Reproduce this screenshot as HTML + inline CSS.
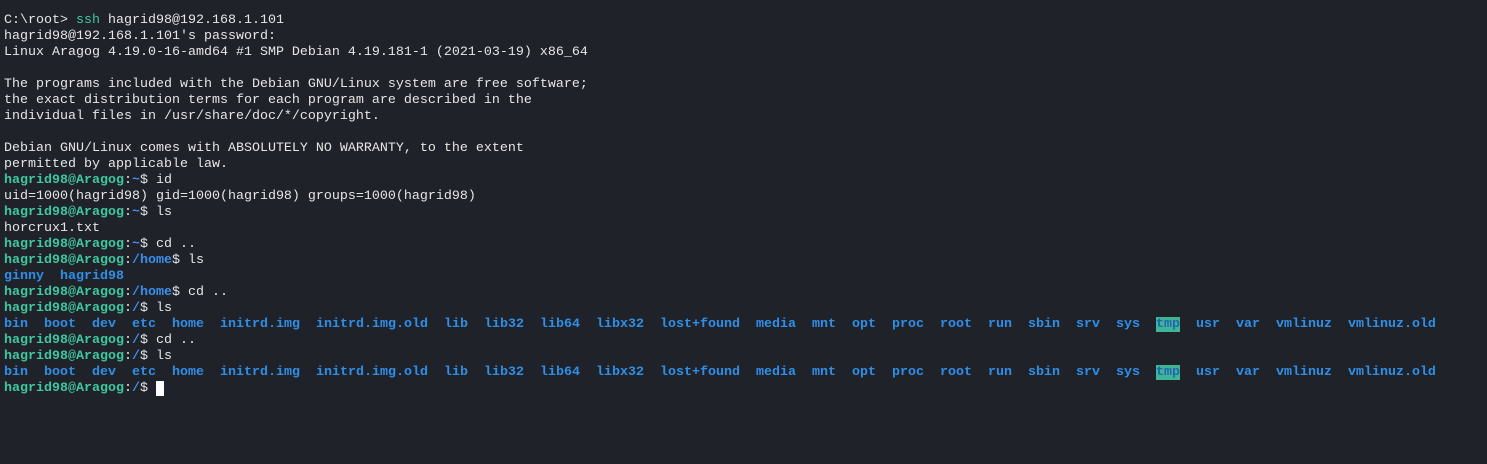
<!DOCTYPE html>
<html><head><meta charset="utf-8"><style>
html,body{margin:0;padding:0;background:#1f2229;width:1487px;height:464px;overflow:hidden}
pre{margin:0;padding:13px 0 0 4px;font-family:"Liberation Mono",monospace;font-size:13.33px;line-height:16px;color:#e6e6e6}
.g{color:#3fc79f;font-weight:bold}
.p{color:#3b8eea;font-weight:bold}
.s{color:#3fc79f}
.d{color:#2f8fe8;font-weight:bold}
.t{background:#3fb598;color:#2464b0;font-weight:bold}
.c{background:#fff;color:#fff}
</style></head><body><pre>C:\root&gt; <span class="s">ssh</span> hagrid98@192.168.1.101
hagrid98@192.168.1.101's password:
Linux Aragog 4.19.0-16-amd64 #1 SMP Debian 4.19.181-1 (2021-03-19) x86_64

The programs included with the Debian GNU/Linux system are free software;
the exact distribution terms for each program are described in the
individual files in /usr/share/doc/*/copyright.

Debian GNU/Linux comes with ABSOLUTELY NO WARRANTY, to the extent
permitted by applicable law.
<span class="g">hagrid98@Aragog</span>:<span class="p">~</span>$ id
uid=1000(hagrid98) gid=1000(hagrid98) groups=1000(hagrid98)
<span class="g">hagrid98@Aragog</span>:<span class="p">~</span>$ ls
horcrux1.txt
<span class="g">hagrid98@Aragog</span>:<span class="p">~</span>$ cd ..
<span class="g">hagrid98@Aragog</span>:<span class="p">/home</span>$ ls
<span class="d">ginny</span>  <span class="d">hagrid98</span>
<span class="g">hagrid98@Aragog</span>:<span class="p">/home</span>$ cd ..
<span class="g">hagrid98@Aragog</span>:<span class="p">/</span>$ ls
<span class="d">bin</span>  <span class="d">boot</span>  <span class="d">dev</span>  <span class="d">etc</span>  <span class="d">home</span>  <span class="d">initrd.img</span>  <span class="d">initrd.img.old</span>  <span class="d">lib</span>  <span class="d">lib32</span>  <span class="d">lib64</span>  <span class="d">libx32</span>  <span class="d">lost+found</span>  <span class="d">media</span>  <span class="d">mnt</span>  <span class="d">opt</span>  <span class="d">proc</span>  <span class="d">root</span>  <span class="d">run</span>  <span class="d">sbin</span>  <span class="d">srv</span>  <span class="d">sys</span>  <span class="t">tmp</span>  <span class="d">usr</span>  <span class="d">var</span>  <span class="d">vmlinuz</span>  <span class="d">vmlinuz.old</span>
<span class="g">hagrid98@Aragog</span>:<span class="p">/</span>$ cd ..
<span class="g">hagrid98@Aragog</span>:<span class="p">/</span>$ ls
<span class="d">bin</span>  <span class="d">boot</span>  <span class="d">dev</span>  <span class="d">etc</span>  <span class="d">home</span>  <span class="d">initrd.img</span>  <span class="d">initrd.img.old</span>  <span class="d">lib</span>  <span class="d">lib32</span>  <span class="d">lib64</span>  <span class="d">libx32</span>  <span class="d">lost+found</span>  <span class="d">media</span>  <span class="d">mnt</span>  <span class="d">opt</span>  <span class="d">proc</span>  <span class="d">root</span>  <span class="d">run</span>  <span class="d">sbin</span>  <span class="d">srv</span>  <span class="d">sys</span>  <span class="t">tmp</span>  <span class="d">usr</span>  <span class="d">var</span>  <span class="d">vmlinuz</span>  <span class="d">vmlinuz.old</span>
<span class="g">hagrid98@Aragog</span>:<span class="p">/</span>$ <span class="c"> </span></pre></body></html>
